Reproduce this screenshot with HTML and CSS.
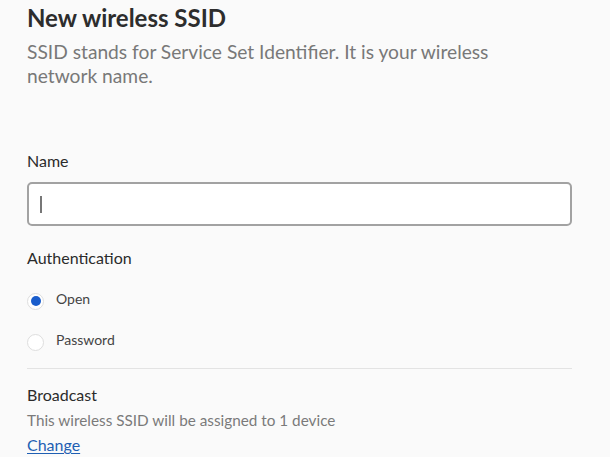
FILE: index.html
```html
<!DOCTYPE html>
<html lang="en">
<head>
<meta charset="utf-8">
<link rel="stylesheet" href="styles.css">
</head>
<body>
<main class="page">
  <h1 class="title">New wireless SSID</h1>
  <p class="subtitle">SSID stands for Service Set Identifier. It is your wireless network name.</p>

  <label class="label name-label" for="ssid">Name</label>
  <div class="input"><span class="caret"></span></div>

  <div class="label auth-label">Authentication</div>
  <div class="radios">
    <div class="radio-row">
      <span class="radio checked"></span>
      <span class="radio-text">Open</span>
    </div>
    <div class="radio-row">
      <span class="radio"></span>
      <span class="radio-text">Password</span>
    </div>
  </div>

  <hr class="divider">

  <div class="label broadcast-label">Broadcast</div>
  <div class="desc">This wireless SSID will be assigned to 1 device</div>
  <a class="link" href="#">Change</a>
</main>
</body>
</html>
```
FILE: styles.css
```css
* { box-sizing: border-box; }
html, body { margin: 0; padding: 0; background: #fafafa; }
body {
  font-family: Lato, "Open Sans", sans-serif;
  color: #2b2b2b;
  overflow: hidden;
}
.page {
  display: flex;
  flex-direction: column;
  align-items: flex-start;
  padding: 0 38px 0 27px;
}
.title {
  margin: 3px 0 0;
  font-size: 24px;
  font-weight: 700;
  line-height: 30px;
  color: #2d2d2d;
}
.subtitle {
  margin: 7px 0 0;
  font-size: 19.2px;
  line-height: 24px;
  color: #787878;
  width: 500px;
}
.label {
  font-size: 16px;
  line-height: 20px;
  color: #2b2b2b;
}
.name-label { margin-top: 63px; }
.input {
  margin-top: 11px;
  width: 100%;
  height: 44px;
  background: #fff;
  border: 2px solid #a2a2a2;
  border-radius: 5px;
  display: flex;
  align-items: center;
  padding-left: 11px;
}
.caret {
  width: 1.5px;
  height: 17px;
  background: #777;
}
.auth-label { margin-top: 22px; }
.radios {
  margin-top: 23px;
  display: flex;
  flex-direction: column;
  gap: 21px;
}
.radio-row {
  display: flex;
  align-items: center;
  height: 20px;
}
.radio {
  width: 17px;
  height: 17px;
  border-radius: 50%;
  border: 1px solid #dedede;
  background: #fff;
  display: flex;
  align-items: center;
  justify-content: center;
}
.radio.checked::after {
  content: "";
  width: 10px;
  height: 10px;
  border-radius: 50%;
  background: #1a5dcc;
}
.radio-text {
  margin-left: 12px;
  font-size: 14px;
  line-height: 20px;
  padding-bottom: 4px;
  color: #444;
}
.divider {
  align-self: stretch;
  margin: 16px 0 0;
  border: 0;
  border-top: 1px solid #e3e3e3;
}
.broadcast-label { margin-top: 16px; }
.desc {
  margin-top: 5px;
  font-size: 15.3px;
  line-height: 20px;
  color: #7a7a7a;
}
.link {
  margin-top: 5px;
  font-size: 16px;
  line-height: 20px;
  color: #1f5fb3;
  text-decoration: underline;
  text-underline-offset: 2px;
}
```
